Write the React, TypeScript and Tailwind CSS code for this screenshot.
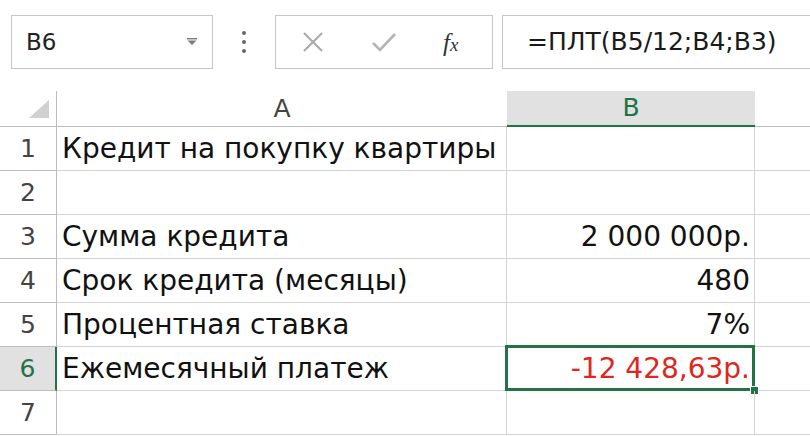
import React from "react";

const rows: { n: number; a: string; b: string; red?: boolean }[] = [
  { n: 1, a: "Кредит на покупку квартиры", b: "" },
  { n: 2, a: "", b: "" },
  { n: 3, a: "Сумма кредита", b: "2 000 000р." },
  { n: 4, a: "Срок кредита (месяцы)", b: "480" },
  { n: 5, a: "Процентная ставка", b: "7%" },
  { n: 6, a: "Ежемесячный платеж", b: "-12 428,63р.", red: true },
  { n: 7, a: "", b: "" },
];

function Toolbar() {
  return (
    <div className="flex h-[91px] items-start overflow-hidden pt-[15px] pl-[11px]">
      <div className="flex h-[54px] w-[202px] shrink-0 items-center justify-between border border-[#c6c6c6] bg-white pl-[14px] pr-[14px]">
        <span className="text-[23px] text-[#222]">B6</span>
        <svg width="12" height="8" viewBox="0 0 12 8">
          <rect x="1" y="0" width="10" height="1.4" fill="#7a7a7a" />
          <path d="M1.5 2.5 L10.5 2.5 L6 7 Z" fill="#7a7a7a" />
        </svg>
      </div>
      <div className="flex h-[54px] w-[62px] shrink-0 flex-col items-center justify-center gap-[5px]">
        <span className="h-[4px] w-[4px] rounded-full bg-[#666]" />
        <span className="h-[4px] w-[4px] rounded-full bg-[#666]" />
        <span className="h-[4px] w-[4px] rounded-full bg-[#666]" />
      </div>
      <div className="flex h-[54px] w-[218px] shrink-0 items-center border border-[#c6c6c6] bg-white">
        <svg className="ml-[27px]" width="20" height="20" viewBox="0 0 20 20">
          <path d="M1 1 L19 19 M19 1 L1 19" stroke="#a9a9a9" strokeWidth="2" fill="none" />
        </svg>
        <svg className="ml-[48px]" width="26" height="22" viewBox="0 0 26 22">
          <path d="M2 12 L9 19 L24 3" stroke="#b4b4b4" strokeWidth="2.6" fill="none" />
        </svg>
        <span className="ml-[46px] font-['Liberation_Serif'] text-[25px] italic leading-none text-[#333]">
          f<span className="text-[19px]">x</span>
        </span>
      </div>
      <div className="ml-[9px] flex h-[54px] w-[330px] shrink-0 items-center border border-[#c6c6c6] bg-white pl-[24px]">
        <span className="text-[25px] text-[#1a1a1a]">=ПЛТ(B5/12;B4;B3)</span>
      </div>
    </div>
  );
}

export default function App() {
  return (
    <div className="h-[436px] w-[810px] overflow-hidden bg-white font-['DejaVu_Sans',sans-serif]">
      <Toolbar />
      <div className="grid grid-cols-[57px_450px_248px_55px]">
        <div className="flex h-[36px] items-end justify-end border-r border-b border-[#bdbdbd] pr-[7px] pb-[8px]">
          <svg width="20" height="18" viewBox="0 0 20 18">
            <path d="M20 0 L20 18 L0 18 Z" fill="#d0d0d0" />
          </svg>
        </div>
        <div className="flex h-[36px] items-center justify-center border-b border-[#bdbdbd] text-[25px] text-[#444]">
          A
        </div>
        <div className="flex h-[36px] items-center justify-center border-b-2 border-[#217346] bg-[#e1e1e1] text-[25px] text-[#217346]">
          B
        </div>
        <div className="h-[36px] border-b border-[#bdbdbd]" />

        {rows.map((r) => {
          const sel = r.n === 6;
          return (
            <React.Fragment key={r.n}>
              <div
                className={
                  sel
                    ? "flex h-[44px] items-center justify-center border-r-2 border-b border-r-[#217346] border-b-[#bdbdbd] bg-[#e1e1e1] text-[25px] text-[#217346]"
                    : "flex h-[44px] items-center justify-center border-r border-b border-[#bdbdbd] text-[25px] text-[#444]"
                }
              >
                {r.n}
              </div>
              <div className="flex h-[44px] items-center whitespace-nowrap border-r border-b border-[#d4d4d4] pl-[5px] text-[28px] text-[#111]">
                {r.a}
              </div>
              <div
                className={
                  "relative flex h-[44px] items-center justify-end whitespace-nowrap border-r border-b border-[#d4d4d4] pr-[4px] text-[28px] " +
                  (r.red ? "text-[#e0261e]" : "text-[#111]")
                }
              >
                {r.b}
                {sel && (
                  <>
                    <div className="absolute -top-[2px] -left-[2px] -right-[1px] -bottom-[1px] border-[3px] border-[#217346]" />
                    <div className="absolute -right-[5px] -bottom-[5px] h-[9px] w-[9px] border border-white bg-[#217346]" />
                  </>
                )}
              </div>
              <div className="h-[44px] border-b border-[#d4d4d4]" />
            </React.Fragment>
          );
        })}
      </div>
    </div>
  );
}
